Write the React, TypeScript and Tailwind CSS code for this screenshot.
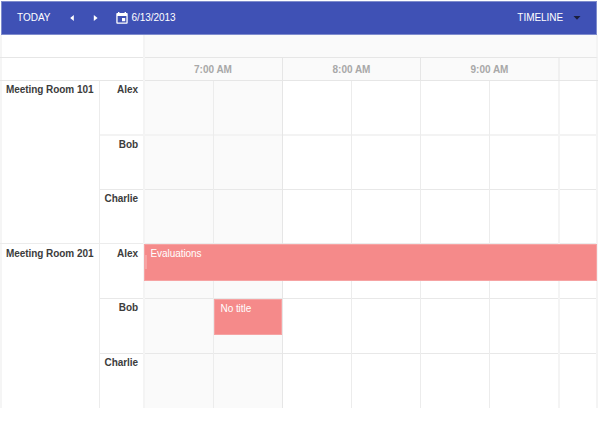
import React from "react";

const slots = [
  { width: "w-[69px]", border: "border-r border-[#ececec]", work: false },
  { width: "w-[69px]", border: "border-r border-[#e6e6e6]", work: false },
  { width: "w-[69px]", border: "border-r border-[#ececec]", work: true },
  { width: "w-[69px]", border: "border-r border-[#ececec]", work: true },
  { width: "w-[69px]", border: "border-r border-[#ececec]", work: true },
  { width: "w-[70px]", border: "border-r-2 border-[#f4f4f4]", work: true },
  { width: "w-[38px]", border: "border-r-2 border-[#f4f4f4]", work: true },
];

type Person = {
  name: string;
  height: string;
  line: string;
  pad: string;
  event?: { title: string; box: string; handle?: boolean };
};

const rooms: { name: string; line: string; pad: string; people: Person[] }[] = [
  {
    name: "Meeting Room 101",
    line: "border-b border-[#ececec]",
    pad: "pt-[3px]",
    people: [
      { name: "Alex", height: "h-[55px]", pad: "pt-[3px]", line: "border-b-2 border-[#f3f3f3]" },
      { name: "Bob", height: "h-[54px]", pad: "pt-[3px]", line: "border-b border-[#e8e8e8]" },
      { name: "Charlie", height: "h-[54px]", pad: "pt-[3px]", line: "border-b border-[#ececec]" },
    ],
  },
  {
    name: "Meeting Room 201",
    line: "",
    pad: "pt-[4px]",
    people: [
      {
        name: "Alex",
        height: "h-[55px]",
        pad: "pt-[4px]",
        line: "border-b border-[#e8e8e8]",
        event: { title: "Evaluations", box: "left-[-1px] top-0 w-[453px] h-[37px]", handle: true },
      },
      {
        name: "Bob",
        height: "h-[55px]",
        pad: "pt-[3px]",
        line: "border-b border-[#e8e8e8]",
        event: { title: "No title", box: "left-[69px] top-0 w-[68px] h-[36px]" },
      },
      { name: "Charlie", height: "h-[54px]", pad: "pt-[3px]", line: "" },
    ],
  },
];

function Toolbar() {
  return (
    <header className="ml-px flex h-[34px] w-[596px] items-center border border-[#7f8ccd] bg-[#3f51b5] pb-px text-[10px] leading-none text-white">
      <span className="ml-[15px] w-[34px] whitespace-nowrap tracking-normal">TODAY</span>
      <svg className="ml-[18px]" width="5" height="8" viewBox="0 0 5 8" fill="white">
        <path d="M4.8 0.9v6.2L1.2 4z" />
      </svg>
      <svg className="ml-[19px]" width="5" height="8" viewBox="0 0 5 8" fill="white">
        <path d="M0.8 0.9v6.2L4.6 4z" />
      </svg>
      <svg className="ml-[18px]" width="12" height="12" viewBox="0 0 12 12">
        <path
          fill="white"
          fillRule="evenodd"
          d="M2 0h1.4v1h5.2V0H10v1h.8q.9 0 .9.8v9q0 .9-.9.9H1.2q-.9 0-.9-.9v-9Q.3 1 1.2 1H2zM1.6 4v6.4h8.8V4zM6 6h3.2v3.2H6z"
        />
      </svg>
      <span className="ml-[3.5px] whitespace-nowrap">6/13/2013</span>
      <span className="ml-auto whitespace-nowrap">TIMELINE</span>
      <svg className="ml-[10px] mr-[15px]" width="8" height="4" viewBox="0 0 8 4" fill="#1b1f3d">
        <path d="M0.5 0h7L4 3.8z" />
      </svg>
    </header>
  );
}

function TimeHeader() {
  return (
    <div className="flex">
      <div className="w-[145px] border-r-2 border-[#f4f4f4]">
        <div className="h-[23px] border-b border-[#e6e6e6]" />
        <div className="h-[23px] border-b border-[#e6e6e6]" />
      </div>
      <div className="w-[453px] bg-[#fafafa] font-bold tracking-[-0.02px] text-[#a8a8a8]">
        <div className="h-[23px] border-b border-r-2 border-[#e6e6e6] border-r-[#f4f4f4]" />
        <div className="flex h-[23px] border-b border-[#e6e6e6] text-center leading-[24px]">
          <div className="w-[138px] border-r border-[#e6e6e6] pr-px">7:00 AM</div>
          <div className="w-[138px] border-r border-[#e6e6e6]">8:00 AM</div>
          <div className="w-[139px] border-r-2 border-[#f0f0f0]">9:00 AM</div>
          <div className="w-[38px] border-r-2 border-[#f4f4f4]" />
        </div>
      </div>
    </div>
  );
}

function PersonRow({ person }: { person: Person }) {
  const { name, height, line, pad, event } = person;
  return (
    <div className={`flex ${height}`}>
      <div className="flex w-[45px] border-r-2 border-[#f4f4f4]">
        <div className={`w-full pr-[5px] text-right font-bold ${pad} ${line}`}>{name}</div>
      </div>
      <div className="relative flex">
        {slots.map((slot, i) => (
          <div key={i} className={`flex ${slot.width} ${slot.border} ${slot.work ? "bg-white" : "bg-[#fafafa]"}`}>
            <div className={`w-full ${line}`} />
          </div>
        ))}
        {event && (
          <div
            className={`absolute ${event.box} border border-[#f6a3a3] bg-[#f58a8a] pl-[5.5px] pt-[3px] text-white`}
          >
            {event.handle && <i className="absolute left-0 top-[10px] h-[14px] w-[2px] bg-[#f7a3a3]" />}
            {event.title}
          </div>
        )}
      </div>
    </div>
  );
}

export default function App() {
  return (
    <main className="h-[424px] w-[600px] overflow-hidden bg-white pt-px font-['Liberation_Sans',Arial,sans-serif] text-[10px] leading-[12px] tracking-[-0.06px] text-[#3c3c3c]">
      <Toolbar />
      <div className="w-[598px] border-l-2 border-[#f5f5f5]">
        <div className="-ml-[2px]">
          <TimeHeader />
          {rooms.map((room) => (
            <section key={room.name} className="flex">
              <div className={`w-[100px] whitespace-nowrap border-r pl-[6px] font-bold ${room.pad} ${room.line} border-r-[#ececec]`}>
                {room.name}
              </div>
              <div>
                {room.people.map((p) => (
                  <PersonRow key={p.name} person={p} />
                ))}
              </div>
            </section>
          ))}
        </div>
      </div>
    </main>
  );
}
